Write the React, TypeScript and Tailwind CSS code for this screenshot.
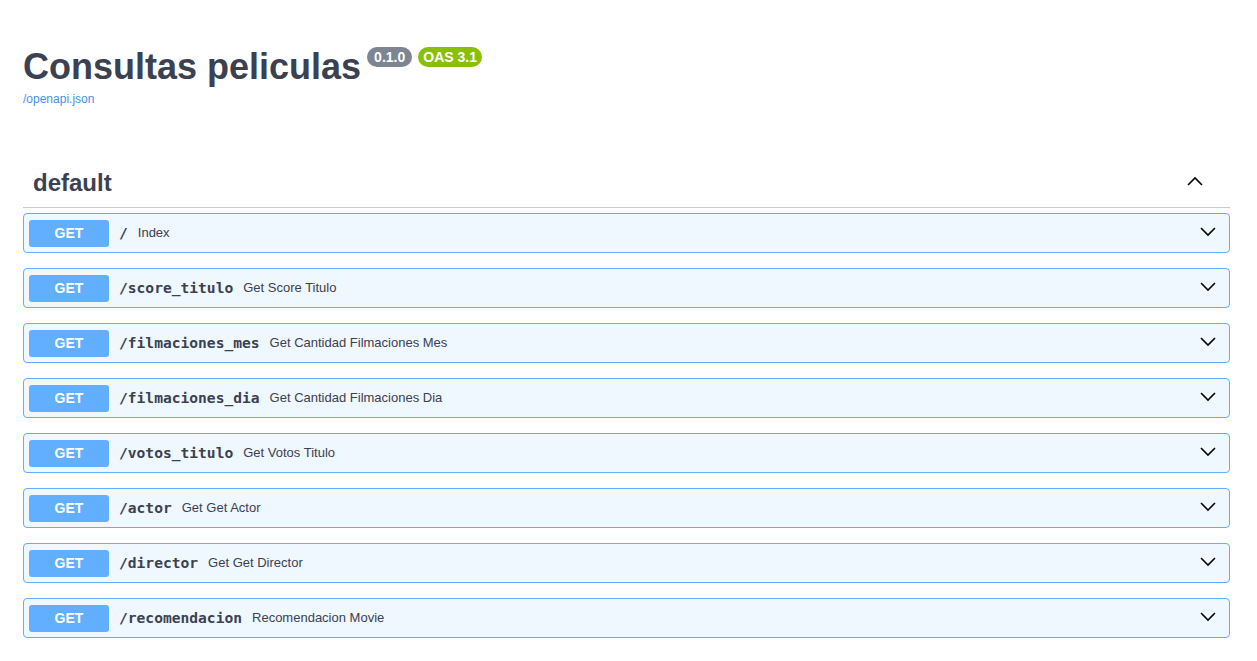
import React from "react";

const ops = [
  { path: "/", summary: "Index" },
  { path: "/score_titulo", summary: "Get Score Titulo" },
  { path: "/filmaciones_mes", summary: "Get Cantidad Filmaciones Mes" },
  { path: "/filmaciones_dia", summary: "Get Cantidad Filmaciones Dia" },
  { path: "/votos_titulo", summary: "Get Votos Titulo" },
  { path: "/actor", summary: "Get Get Actor" },
  { path: "/director", summary: "Get Get Director" },
  { path: "/recomendacion", summary: "Recomendacion Movie" },
];

function Chevron({ up }: { up?: boolean }) {
  return (
    <svg width="20" height="20" viewBox="0 0 20 20" className="shrink-0 mt-[-4px]">
      <path
        d={up ? "M3 14 L10 7 L17 14" : "M3 7 L10 14 L17 7"}
        fill="none"
        stroke="#000"
        strokeWidth="1.6"
      />
    </svg>
  );
}

export default function App() {
  return (
    <div
      className="min-h-[661px] bg-white text-[#3b4151] pl-[23px] pr-[27px]"
      style={{ fontFamily: '"Liberation Sans", Arial, sans-serif' }}
    >
      <div className="pt-[41px]">
        <div className="flex items-start">
          <h1 className="text-[36px] font-bold leading-[52px] text-[#3b4151]">
            Consultas peliculas
          </h1>
          <div className="flex gap-[6px] ml-[6px] mt-[6px]">
            <span className="bg-[#7d8492] text-white text-[14px] font-bold rounded-[57px] px-[7px] h-[20px] leading-[20px]">
              0.1.0
            </span>
            <span className="bg-[#89bf04] text-white text-[14px] font-bold rounded-[57px] px-[5px] h-[20px] leading-[20px]">
              OAS 3.1
            </span>
          </div>
        </div>
        <div className="text-[12px] text-[#4990e2] leading-[14px] mt-[-1px]">
          /openapi.json
        </div>
      </div>

      <div className="mt-[52px]">
        <div className="flex items-center justify-between h-[50px] border-b border-[#c9cbd0] pl-[10px] pr-[25px]">
          <span className="text-[24px] font-bold text-[#3b4151]">default</span>
          <Chevron up />
        </div>
        <div className="flex flex-col gap-[15px] mt-[5px]">
          {ops.map((op) => (
            <div
              key={op.path}
              className="flex items-center h-[40px] border border-[#61affe] bg-[#eff7ff] rounded-[4px] pl-[5px] pr-[11px]"
            >
              <span className="w-[80px] h-[27px] rounded-[3px] bg-[#61affe] text-white text-[14px] font-bold flex items-center justify-center shrink-0">
                GET
              </span>
              <span
                className="ml-[10px] text-[14.6px] font-bold text-[#3b4151]"
                style={{ fontFamily: '"DejaVu Sans Mono", monospace' }}
              >
                {op.path}
              </span>
              <span className="ml-[10px] text-[13px] text-[#3b4151]">{op.summary}</span>
              <div className="flex-1" />
              <Chevron />
            </div>
          ))}
        </div>
      </div>
    </div>
  );
}
